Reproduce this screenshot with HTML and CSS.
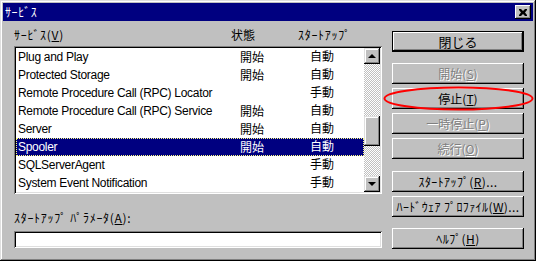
FILE: index.html
```html
<!DOCTYPE html>
<html lang="ja">
<head>
    <meta charset="UTF-8">
    <meta name="viewport" content="width=device-width, initial-scale=1.0">
    <title>ｻｰﾋﾞｽ</title>
    <link rel="stylesheet" href="styles.css">
</head>
<body>
    <div class="window">
        <div class="titlebar">
            <span class="title">ｻｰﾋﾞｽ</span>
            <span class="close-x">
                <svg width="8" height="7" viewBox="0 0 8 7"><path d="M0 0h2l2 2 2-2h2v1l-2 2.5 2 2.5v1h-2l-2-2-2 2h-2v-1l2-2.5-2-2.5z" fill="#000"/></svg>
            </span>
        </div>

        <div class="content">
            <div class="left">
                <div class="heads">
                    <span class="h-name">ｻｰﾋﾞｽ(<u>V</u>)</span>
                    <span class="h-state">状態</span>
                    <span>ｽﾀｰﾄｱｯﾌﾟ</span>
                </div>

                <div class="listbox">
                    <div class="rows">
                        <div class="row"><span class="c-name">Plug and Play</span><span class="c-state">開始</span><span>自動</span></div>
                        <div class="row"><span class="c-name">Protected Storage</span><span class="c-state">開始</span><span>自動</span></div>
                        <div class="row"><span class="c-name">Remote Procedure Call (RPC) Locator</span><span class="c-state"></span><span>手動</span></div>
                        <div class="row"><span class="c-name">Remote Procedure Call (RPC) Service</span><span class="c-state">開始</span><span>自動</span></div>
                        <div class="row"><span class="c-name">Server</span><span class="c-state">開始</span><span>自動</span></div>
                        <div class="row selected"><span class="c-name">Spooler</span><span class="c-state">開始</span><span>自動</span></div>
                        <div class="row"><span class="c-name">SQLServerAgent</span><span class="c-state"></span><span>手動</span></div>
                        <div class="row"><span class="c-name">System Event Notification</span><span class="c-state"></span><span>手動</span></div>
                    </div>
                    <div class="scrollbar">
                        <div class="sb-btn"><span class="arrow up"></span></div>
                        <div class="track"><div class="thumb"></div></div>
                        <div class="sb-btn"><span class="arrow down"></span></div>
                    </div>
                </div>

                <div class="param-label">ｽﾀｰﾄｱｯﾌﾟ ﾊﾟﾗﾒｰﾀ(<u>A</u>):</div>
                <div class="textbox"></div>
            </div>

            <div class="right">
                <div class="btn default"><span class="face">閉じる</span></div>
                <div class="btn disabled group">開始(<u>S</u>)</div>
                <div class="btn">停止(<u>T</u>)</div>
                <div class="btn disabled">一時停止(<u>P</u>)</div>
                <div class="btn disabled">続行(<u>O</u>)</div>
                <div class="btn kana group2">ｽﾀｰﾄｱｯﾌﾟ(<u>R</u>)...</div>
                <div class="btn kana">ﾊｰﾄﾞｳｪｱ ﾌﾟﾛﾌｧｲﾙ(<u>W</u>)...</div>
                <div class="btn kana group">ﾍﾙﾌﾟ(<u>H</u>)</div>
            </div>
        </div>

        <!-- red marker drawn over the stop button -->
        <svg class="marker" width="152" height="26" viewBox="0 0 152 26">
            <ellipse cx="75.5" cy="12.5" rx="74" ry="11" fill="none" stroke="#f00" stroke-width="2"/>
        </svg>
    </div>
</body>
</html>
```

FILE: styles.css
```css
body {
  margin: 0;
  padding: 0;
  font-family: "Liberation Sans", "Noto Sans CJK JP", sans-serif;
  font-size: 12px;
  color: #000;
  background: #c0c0c0;
}

.window {
  position: relative;
  width: 536px;
  height: 261px;
  box-sizing: border-box;
  padding: 3px 3px 3px 3px;
  background: #c0c0c0;
  box-shadow: inset -1px -1px #000, inset 1px 1px #dfdfdf,
              inset -2px -2px #808080, inset 2px 2px #fff;
  overflow: hidden;
}

.titlebar {
  height: 18px;
  background: #000080;
  color: #fff;
  display: flex;
  align-items: center;
  justify-content: space-between;
  padding: 0 2px 0 2px;
}

.title {
  font-family: "Noto Sans CJK JP", sans-serif;
  line-height: 14px;
  letter-spacing: 0.6px;
}

.close-x {
  width: 16px;
  height: 14px;
  background: #c0c0c0;
  box-shadow: inset -1px -1px #000, inset 1px 1px #fff, inset -2px -2px #808080;
  display: flex;
  align-items: center;
  justify-content: center;
}

.content {
  display: flex;
  gap: 10px;
  padding: 7px 0 0 11px;
}

.left {
  width: 368px;
  display: flex;
  flex-direction: column;
}

.heads {
  display: flex;
  height: 14px;
  line-height: 14px;
  margin-bottom: 4px;
  font-family: "Noto Sans CJK JP", sans-serif;
  letter-spacing: 0.7px;
}

.h-name { width: 217px; }
.h-state { width: 67px; letter-spacing: 0; }

.listbox {
  height: 148px;
  box-sizing: border-box;
  padding: 2px;
  display: flex;
  background: #fff;
  box-shadow: inset 1px 1px #808080, inset -1px -1px #fff,
              inset 2px 2px #000, inset -2px -2px #dfdfdf;
}

.rows {
  flex: 1;
  overflow: hidden;
}

.row {
  display: flex;
  height: 18px;
  line-height: 18px;
  padding-left: 2px;
  white-space: nowrap;
}

.c-name { width: 222px; overflow: hidden; letter-spacing: -0.3px; }
.c-state { width: 70px; font-family: "Noto Sans CJK JP", sans-serif; }

.row.selected {
  background: #000080;
  color: #fff;
  outline: 1px dotted #ffff80;
  outline-offset: -1px;
}

.scrollbar {
  width: 16px;
  display: flex;
  flex-direction: column;
}

.sb-btn {
  height: 16px;
  background: #c0c0c0;
  box-shadow: inset -1px -1px #000, inset 1px 1px #dfdfdf,
              inset -2px -2px #808080, inset 2px 2px #fff;
  display: flex;
  align-items: center;
  justify-content: center;
}

.arrow {
  width: 0;
  height: 0;
  border-left: 4px solid transparent;
  border-right: 4px solid transparent;
}

.arrow.up { border-bottom: 4px solid #000; }
.arrow.down { border-top: 4px solid #000; }

.track {
  flex: 1;
  background: repeating-conic-gradient(#c0c0c0 0 25%, #fff 0 50%) 0 0 / 2px 2px;
}

.thumb {
  height: 30px;
  margin-top: 52px;
  background: #c0c0c0;
  box-shadow: inset -1px -1px #000, inset 1px 1px #dfdfdf,
              inset -2px -2px #808080, inset 2px 2px #fff;
}

.param-label {
  margin-top: 17px;
  height: 14px;
  line-height: 14px;
  font-family: "Noto Sans CJK JP", sans-serif;
  letter-spacing: 0.7px;
}

.textbox {
  margin-top: 6px;
  height: 17px;
  background: #fff;
  box-shadow: inset 1px 1px #808080, inset -1px -1px #fff,
              inset 2px 2px #000, inset -2px -2px #dfdfdf;
}

.right {
  width: 132px;
  display: flex;
  flex-direction: column;
  gap: 4px;
  margin-top: 3px;
}

.btn {
  height: 21px;
  box-sizing: border-box;
  display: flex;
  align-items: center;
  justify-content: center;
  font-family: "Noto Sans CJK JP", sans-serif;
  background: #c0c0c0;
  box-shadow: inset -1px -1px #000, inset 1px 1px #fff,
              inset -2px -2px #808080;
}

.btn.kana { letter-spacing: 0.4px; }

.btn.default {
  border: 1px solid #000;
  box-shadow: none;
  padding: 0;
  font-size: 13px;
}

.btn.default .face {
  width: 100%;
  height: 100%;
  display: flex;
  align-items: center;
  justify-content: center;
  box-shadow: inset -1px -1px #000, inset 1px 1px #fff,
              inset -2px -2px #808080;
}

.btn.disabled {
  color: #808080;
  text-shadow: 1px 1px #fff;
}

.btn.group { margin-top: 7px; }
.btn.group2 { margin-top: 8px; }

.marker {
  position: absolute;
  left: 383px;
  top: 86px;
}
```
